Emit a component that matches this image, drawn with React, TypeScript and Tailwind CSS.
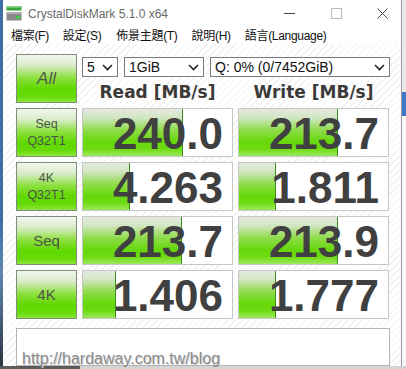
const rows = [
  { label: ['Seq', 'Q32T1'], read: '240.0', readBar: 100, write: '213.7', writeBar: 99 },
  { label: ['4K', 'Q32T1'], read: '4.263', readBar: 47, write: '1.811', writeBar: 37 },
  { label: ['Seq'], read: '213.7', readBar: 99, write: '213.9', writeBar: 99 },
  { label: ['4K'], read: '1.406', readBar: 33, write: '1.777', writeBar: 37 },
];

const Chevron = () => (
  <svg width="11" height="7" viewBox="0 0 11 7" className="shrink-0">
    <polyline points="1,1 5.5,5.5 10,1" fill="none" stroke="#222" strokeWidth="1.6" />
  </svg>
);

const SelectBox = ({ text, width }: { text: string; width: string }) => (
  <div className={`${width} h-[20px] bg-white border border-[#7a7a7a] flex items-center justify-between pl-[4px] pr-[4px] text-[14px] text-[#111] leading-none`}>
    <span>{text}</span>
    <Chevron />
  </div>
);

const ResultBox = ({ value, bar }: { value: string; bar: number }) => (
  <div className="relative w-[151px] h-[49px] bg-white border border-[#c6c6c6] overflow-hidden">
    <div
      className="absolute left-0 top-0 bottom-0 border-r border-[#3c8a1c] bg-[linear-gradient(to_bottom,#e4e9e0_0%,#d2e6c4_18%,#8edc48_45%,#66d80a_70%,#6edb12_85%,#9ee85c_100%)]"
      style={{ width: `${bar}px` }}
    />
    <div className="relative h-full flex items-center justify-end pr-[9px] pt-[3px] text-[44px] font-bold text-[#404040] leading-none">
      {value}
    </div>
  </div>
);

const LabelBox = ({ lines }: { lines: string[] }) => (
  <div className="w-[61px] h-[49px] border border-[#7f8e7a] bg-[linear-gradient(to_bottom,#f3f6f0_0%,#d9ecca_22%,#8ee040_48%,#5fd800_72%,#66da08_88%,#8ee63c_100%)] flex flex-col items-center justify-center text-[#4c5448]">
    {lines.length > 1 ? (
      lines.map((l) => (
        <span key={l} className="text-[12.5px] leading-[17px]">
          {l}
        </span>
      ))
    ) : (
      <span className="text-[15px] leading-none">{lines[0]}</span>
    )}
  </div>
);

export default function App() {
  return (
    <div className="w-[406px] h-[369px] overflow-hidden flex flex-col bg-[#c9c9c9] font-['Liberation_Sans',Arial,sans-serif]">
      <div className="flex h-[366px]">
        {/* desktop strip left */}
        <div className="w-[3px] bg-[linear-gradient(to_bottom,#3d6ea6_0%,#3d6ea6_60%,#5f86b0_75%,#2c3440_100%)]" />

        {/* window */}
        <div className="relative w-[399px] bg-white flex flex-col border-r border-[#9a9a9a]">
          {/* title bar */}
          <div className="h-[27px] flex items-center pl-[3px]">
            <svg width="16" height="15" viewBox="0 0 16 15" className="shrink-0">
              <rect x="0.5" y="0.5" width="15" height="4" fill="#3aa43a" />
              <rect x="0.5" y="0.5" width="15" height="1.5" fill="#6cc86c" />
              <rect x="0.5" y="6" width="15" height="8.5" fill="#8a8a8a" />
              <rect x="0.5" y="6" width="15" height="2" fill="#b0b0b0" />
              <rect x="10" y="10" width="4" height="2.5" fill="#3fd03f" />
            </svg>
            <span className="ml-[6px] text-[12px] text-[#6a6a6a] leading-none">CrystalDiskMark 5.1.0 x64</span>
            <div className="ml-auto flex items-center">
              <svg width="11" height="11" viewBox="0 0 11 11" className="mr-[36px]">
                <line x1="0" y1="5.5" x2="11" y2="5.5" stroke="#444" strokeWidth="1" />
              </svg>
              <svg width="11" height="11" viewBox="0 0 11 11" className="mr-[35px]">
                <rect x="0.5" y="0.5" width="10" height="10" fill="none" stroke="#bbb" strokeWidth="1" />
              </svg>
              <svg width="11" height="11" viewBox="0 0 11 11" className="mr-[13px]">
                <line x1="0.5" y1="0.5" x2="10.5" y2="10.5" stroke="#444" strokeWidth="1" />
                <line x1="10.5" y1="0.5" x2="0.5" y2="10.5" stroke="#444" strokeWidth="1" />
              </svg>
            </div>
          </div>

          {/* menu bar */}
          <div className="h-[17px] flex items-center pl-[8px] text-[12px] text-[#111] leading-none font-['Liberation_Sans','Noto_Sans_CJK_TC',sans-serif] tracking-[-0.3px]">
            <span>檔案(F)</span>
            <span className="ml-[14px]">設定(S)</span>
            <span className="ml-[15px]">佈景主題(T)</span>
            <span className="ml-[14px]">說明(H)</span>
            <span className="ml-[14px]">語言(Language)</span>
          </div>

          {/* content */}
          <div className="flex-1 bg-[repeating-linear-gradient(135deg,#ffffff_0px,#ffffff_4px,#f1f1f1_4px,#f1f1f1_5px)] pl-[13px] pt-[10px] flex flex-col">
            <div className="flex gap-[5px] h-[49px]">
              <div className="w-[61px] h-[49px] border border-[#7f8e7a] bg-[linear-gradient(to_bottom,#f3f6f0_0%,#d9ecca_22%,#8ee040_48%,#5fd800_72%,#66da08_88%,#8ee63c_100%)] flex items-center justify-center">
                <span className="text-[17px] italic text-[#555a50] leading-none">All</span>
              </div>
              <div className="flex flex-col">
                <div className="flex gap-[6px] pt-[3px]">
                  <SelectBox text="5" width="w-[36px]" />
                  <SelectBox text="1GiB" width="w-[80px]" />
                  <SelectBox text="Q: 0% (0/7452GiB)" width="w-[180px]" />
                </div>
                <div className="flex gap-[5px] mt-[5px] h-[21px] font-['DejaVu_Sans',sans-serif] font-bold text-[17px] text-[#3c3a38] leading-[21px]">
                  <div className="w-[151px] text-center">Read [MB/s]</div>
                  <div className="w-[151px] text-center">Write [MB/s]</div>
                </div>
              </div>
            </div>

            <div className="flex flex-col gap-[5px] mt-[5px]">
              {rows.map((r) => (
                <div key={r.read + r.write} className="flex gap-[5px]">
                  <LabelBox lines={r.label} />
                  <ResultBox value={r.read} bar={r.readBar} />
                  <ResultBox value={r.write} bar={r.writeBar} />
                </div>
              ))}
            </div>

            <div className="mt-[9px] w-[374px] h-[38px] bg-white border border-[#b4b4b4]" />
          </div>

          {/* watermark */}
          <div className="absolute left-[19px] top-[351px] text-[16px] leading-[16px] text-[#8a8a8a] [text-shadow:1px_1px_0_#d8d8d8] whitespace-nowrap">
            http://hardaway.com.tw/blog
          </div>
        </div>

        {/* desktop strip right */}
        <div className="flex-1 flex flex-col bg-[#f2f2f2]">
          <div className="h-[92px] bg-[#e9e9e9]" />
          <div className="h-[24px] bg-[#3f78c8]" />
          <div className="flex-1 bg-[#f8f8f8]" />
        </div>
      </div>
      <div className="flex-1 flex">
        <div className="w-[80px] bg-[#5a5a5a]" />
        <div className="flex-1 bg-[#d4d4d4]" />
      </div>
    </div>
  );
}
